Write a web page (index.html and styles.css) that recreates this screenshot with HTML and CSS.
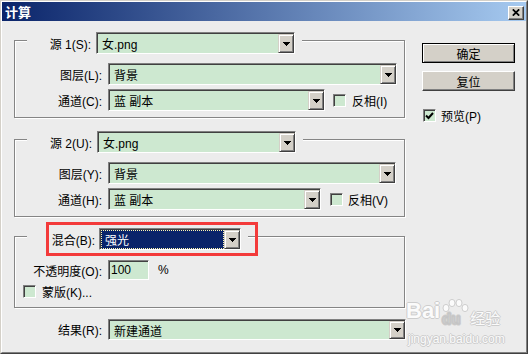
FILE: index.html
```html
<!DOCTYPE html>
<html lang="zh-CN">
<head>
    <meta charset="UTF-8">
    <title>计算</title>
    <link rel="stylesheet" href="styles.css">
</head>
<body>
<div class="window">
    <div class="frame">
        <div class="titlebar">
            <span class="title">计算</span>
            <span class="close"><svg width="8" height="7" viewBox="0 0 8 7"><path d="M0.8 0.3 L7.2 6.7 M7.2 0.3 L0.8 6.7" stroke="#000" stroke-width="1.7"/></svg></span>
        </div>
        <div class="content">
            <div class="main">
                <!-- source 1 -->
                <div class="group">
                    <div class="legend lg1">
                        <span class="label">源 1(S):</span>
                        <div class="select s-src">
                            <div class="select-in">
                                <div class="field">女.png</div>
                                <div class="drop"><svg width="7" height="4" viewBox="0 0 7 4"><polygon points="0,0 7,0 4,4 3,4"/></svg></div>
                            </div>
                        </div>
                    </div>
                    <div class="row first">
                        <span class="label">图层(L):</span>
                        <div class="select s-layer">
                            <div class="select-in">
                                <div class="field">背景</div>
                                <div class="drop"><svg width="7" height="4" viewBox="0 0 7 4"><polygon points="0,0 7,0 4,4 3,4"/></svg></div>
                            </div>
                        </div>
                    </div>
                    <div class="row">
                        <span class="label">通道(C):</span>
                        <div class="select s-chan">
                            <div class="select-in">
                                <div class="field">蓝 副本</div>
                                <div class="drop"><svg width="7" height="4" viewBox="0 0 7 4"><polygon points="0,0 7,0 4,4 3,4"/></svg></div>
                            </div>
                        </div>
                        <span class="check inv1"></span>
                        <span class="check-text">反相(I)</span>
                    </div>
                </div>

                <!-- source 2 -->
                <div class="group g2">
                    <div class="legend lg2">
                        <span class="label">源 2(U):</span>
                        <div class="select s-src">
                            <div class="select-in">
                                <div class="field">女.png</div>
                                <div class="drop"><svg width="7" height="4" viewBox="0 0 7 4"><polygon points="0,0 7,0 4,4 3,4"/></svg></div>
                            </div>
                        </div>
                    </div>
                    <div class="row first">
                        <span class="label">图层(Y):</span>
                        <div class="select s-layer2">
                            <div class="select-in">
                                <div class="field">背景</div>
                                <div class="drop"><svg width="7" height="4" viewBox="0 0 7 4"><polygon points="0,0 7,0 4,4 3,4"/></svg></div>
                            </div>
                        </div>
                    </div>
                    <div class="row">
                        <span class="label">通道(H):</span>
                        <div class="select s-chan2">
                            <div class="select-in">
                                <div class="field">蓝 副本</div>
                                <div class="drop"><svg width="7" height="4" viewBox="0 0 7 4"><polygon points="0,0 7,0 4,4 3,4"/></svg></div>
                            </div>
                        </div>
                        <span class="check inv2"></span>
                        <span class="check-text t2">反相(V)</span>
                    </div>
                </div>

                <!-- blending -->
                <div class="group g3">
                    <div class="legend lg3">
                        <span class="label">混合(B):</span>
                        <div class="select s-blend">
                            <div class="select-in">
                                <div class="field active">强光</div>
                                <div class="drop"><svg width="7" height="4" viewBox="0 0 7 4"><polygon points="0,0 7,0 4,4 3,4"/></svg></div>
                            </div>
                        </div>
                        <div class="mark"></div>
                    </div>
                    <div class="row opacity">
                        <span class="label">不透明度(O):</span>
                        <div class="input">100</div>
                        <span class="percent">%</span>
                    </div>
                    <div class="row mask">
                        <span class="check"></span>
                        <span class="check-text">蒙版(K)...</span>
                    </div>
                </div>

                <div class="result">
                    <span class="label">结果(R):</span>
                    <div class="select s-result">
                        <div class="select-in">
                            <div class="field">新建通道</div>
                            <div class="drop"><svg width="7" height="4" viewBox="0 0 7 4"><polygon points="0,0 7,0 4,4 3,4"/></svg></div>
                        </div>
                    </div>
                </div>
            </div>

            <div class="side">
                <div class="btn default">确定</div>
                <div class="btn">复位</div>
                <div class="preview">
                    <span class="check"><svg width="9" height="8" viewBox="0 0 9 8"><polyline points="1,3.5 3.5,6 8,1" fill="none" stroke="#000" stroke-width="2"/></svg></span>
                    <span>预览(P)</span>
                </div>
            </div>
        </div>
    </div>

    <div class="watermark">
        <div class="wm-top">
            <span class="wm-bai">Bai</span>
            <svg class="wm-paw" width="30" height="27" viewBox="0 0 30 27">
                <ellipse cx="6" cy="9" rx="3" ry="3.6"/>
                <ellipse cx="12" cy="4" rx="3" ry="3.6"/>
                <ellipse cx="19" cy="4" rx="3" ry="3.6"/>
                <ellipse cx="25" cy="9" rx="3" ry="3.6"/>
                <text x="2" y="25" class="wm-du">du</text>
            </svg>
            <span class="wm-jy">经验</span>
        </div>
        <div class="wm-url">jingyan.baidu.com</div>
    </div>
</div>
</body>
</html>
```

FILE: styles.css
```css
* {
    box-sizing: border-box;
}
body {
    margin: 0;
    font-family: "Liberation Sans", "Noto Sans CJK SC", sans-serif;
    font-size: 12px;
    color: #000;
}
.window {
    position: relative;
    width: 528px;
    height: 354px;
    border: 1px solid;
    border-color: #d4d0c8 #404040 #404040 #d4d0c8;
}
.frame {
    height: 100%;
    display: flex;
    flex-direction: column;
    background: #ececec;
    border: 1px solid;
    border-color: #fff #808080 #808080 #fff;
}

/* title bar */
.titlebar {
    height: 19px;
    flex: none;
    display: flex;
    align-items: center;
    justify-content: space-between;
    padding: 0 2px 0 3px;
    background: linear-gradient(to right, #0a246a, #a6caf0);
}
.title {
    color: #fff;
    font-weight: bold;
    font-size: 13px;
    font-family: "Noto Sans CJK SC", sans-serif;
}
.close {
    width: 16px;
    height: 14px;
    margin-top: 2px;
    display: flex;
    align-items: center;
    justify-content: center;
    background: #d4d0c8;
    border: 1px solid;
    border-color: #fff #404040 #404040 #fff;
    box-shadow: inset -1px -1px 0 #808080;
}

.content {
    flex: 1;
    display: flex;
}
.main {
    width: 403px;
    padding-left: 12px;
}
.side {
    margin-left: 17px;
    padding-top: 22px;
}

/* group boxes */
.group {
    width: 391px;
    margin-top: 19px;
    padding-bottom: 6px;
    border: 1px solid #858585;
    box-shadow: 1px 1px 0 #fff, inset 1px 1px 0 #fff;
}
.g2 {
    margin-top: 21px;
}
.g3 {
    margin-top: 19px;
    padding-bottom: 9px;
}
.legend {
    position: relative;
    display: flex;
    align-items: center;
    height: 22px;
    margin: -9px 0 0 12px;
    background: #ececec;
}
.lg1 { width: 275px; }
.lg1 .label { width: 64px; }
.lg1 .select { margin-left: 5px; }
.lg2 { width: 276px; }
.lg2 .label { width: 65px; }
.lg2 .select { margin-left: 5px; }
.lg3 { width: 221px; }
.lg3 .label { width: 68px; }
.lg3 .select { margin-left: 4px; }

.label {
    flex: none;
    width: 87px;
    text-align: right;
    white-space: nowrap;
}
.row {
    display: flex;
    align-items: center;
    height: 22px;
    margin-top: 4px;
}
.row.first {
    margin-top: 9px;
}
.row .select {
    margin-left: 6px;
}

/* combo boxes */
.select {
    flex: none;
    display: flex;
    height: 22px;
    border: 1px solid;
    border-color: #808080 #fff #fff #808080;
}
.select-in {
    flex: 1;
    display: flex;
    min-width: 0;
    border-style: solid;
    border-width: 1px 0 0 1px;
    border-color: #404040;
    background: #cde8d0;
}
.field {
    flex: 1;
    display: flex;
    align-items: center;
    padding-left: 4px;
    white-space: nowrap;
}
.field.active {
    background: #0a246a;
    color: #fff;
    outline: 1px dotted #fff6b0;
    outline-offset: -1px;
}
.drop {
    flex: none;
    width: 16px;
    display: flex;
    align-items: center;
    justify-content: center;
    background: #d4d0c8;
    border: 1px solid;
    border-color: #d4d0c8 #404040 #404040 #d4d0c8;
    box-shadow: inset 1px 1px 0 #fff, inset -1px -1px 0 #808080;
}
.drop svg {
    shape-rendering: crispEdges;
}
.s-src { width: 199px; }
.s-layer { width: 289px; }
.s-layer2 { width: 288px; }
.s-chan { width: 217px; }
.s-chan2 { width: 213px; }
.s-blend { width: 142px; }
.s-result { width: 298px; height: 21px; }

/* check boxes */
.check {
    flex: none;
    width: 13px;
    height: 13px;
    display: flex;
    align-items: center;
    justify-content: center;
    border: 1px solid;
    border-color: #808080 #fff #fff #808080;
    box-shadow: inset 1px 1px 0 #404040;
    background: #cde8d0;
}
.inv1 { margin-left: 8px; }
.inv2 { margin-left: 9px; }
.check-text {
    margin-left: 6px;
    white-space: nowrap;
}
.check-text.t2 { margin-left: 5px; }

.opacity {
    height: 20px;
    margin-top: 10px;
}
.input {
    width: 41px;
    height: 20px;
    margin-left: 6px;
    display: flex;
    align-items: center;
    padding-left: 2px;
    border: 1px solid;
    border-color: #808080 #fff #fff #808080;
    box-shadow: inset 1px 1px 0 #404040;
    background: #cde8d0;
}
.percent {
    margin-left: 9px;
}
.mask {
    height: 13px;
    margin-top: 5px;
    padding-left: 8px;
}

.result {
    display: flex;
    align-items: center;
    margin-top: 11px;
}
.result .label {
    width: 88px;
}
.result .select {
    margin-left: 6px;
}

/* buttons */
.btn {
    width: 93px;
    height: 20px;
    display: flex;
    align-items: center;
    justify-content: center;
    background: #d4d0c8;
    border: 1px solid;
    border-color: #fff #404040 #404040 #fff;
    box-shadow: inset -1px -1px 0 #808080;
}
.btn.default {
    border-color: #000;
    box-shadow: inset 1px 1px 0 #fff, inset -1px -1px 0 #808080;
}
.btn + .btn {
    margin-top: 8px;
}
.preview {
    display: flex;
    align-items: center;
    margin: 16px 0 0 1px;
}
.preview .check {
    margin-right: 5px;
}

/* annotation and watermark */
.mark {
    position: absolute;
    left: 19px;
    top: -6px;
    width: 212px;
    height: 34px;
    border: 3px solid #f33a3a;
}
.watermark {
    position: absolute;
    left: 405px;
    top: 295px;
    color: #fbfbfb;
    text-shadow: 1px 0 #cdcdcd, -1px 0 #cdcdcd, 0 1px #cdcdcd, 0 -1px #cdcdcd;
}
.wm-top {
    display: flex;
    align-items: flex-end;
    height: 32px;
}
.wm-bai {
    font-family: "Liberation Sans", sans-serif;
    font-weight: bold;
    font-size: 22px;
    line-height: 22px;
    margin-bottom: 6px;
}
.wm-paw {
    fill: #fbfbfb;
    stroke: #c4c4c4;
    stroke-width: 0.8;
    margin-bottom: 2px;
}
.wm-du {
    font-family: "Liberation Sans", sans-serif;
    font-weight: bold;
    font-size: 15px;
}
.wm-jy {
    font-family: "Noto Sans CJK SC", sans-serif;
    font-size: 15px;
    line-height: 16px;
    margin: 0 0 2px 0;
}
.wm-url {
    font-family: "Liberation Sans", sans-serif;
    font-size: 12px;
    margin: 4px 0 0 2px;
}
```
